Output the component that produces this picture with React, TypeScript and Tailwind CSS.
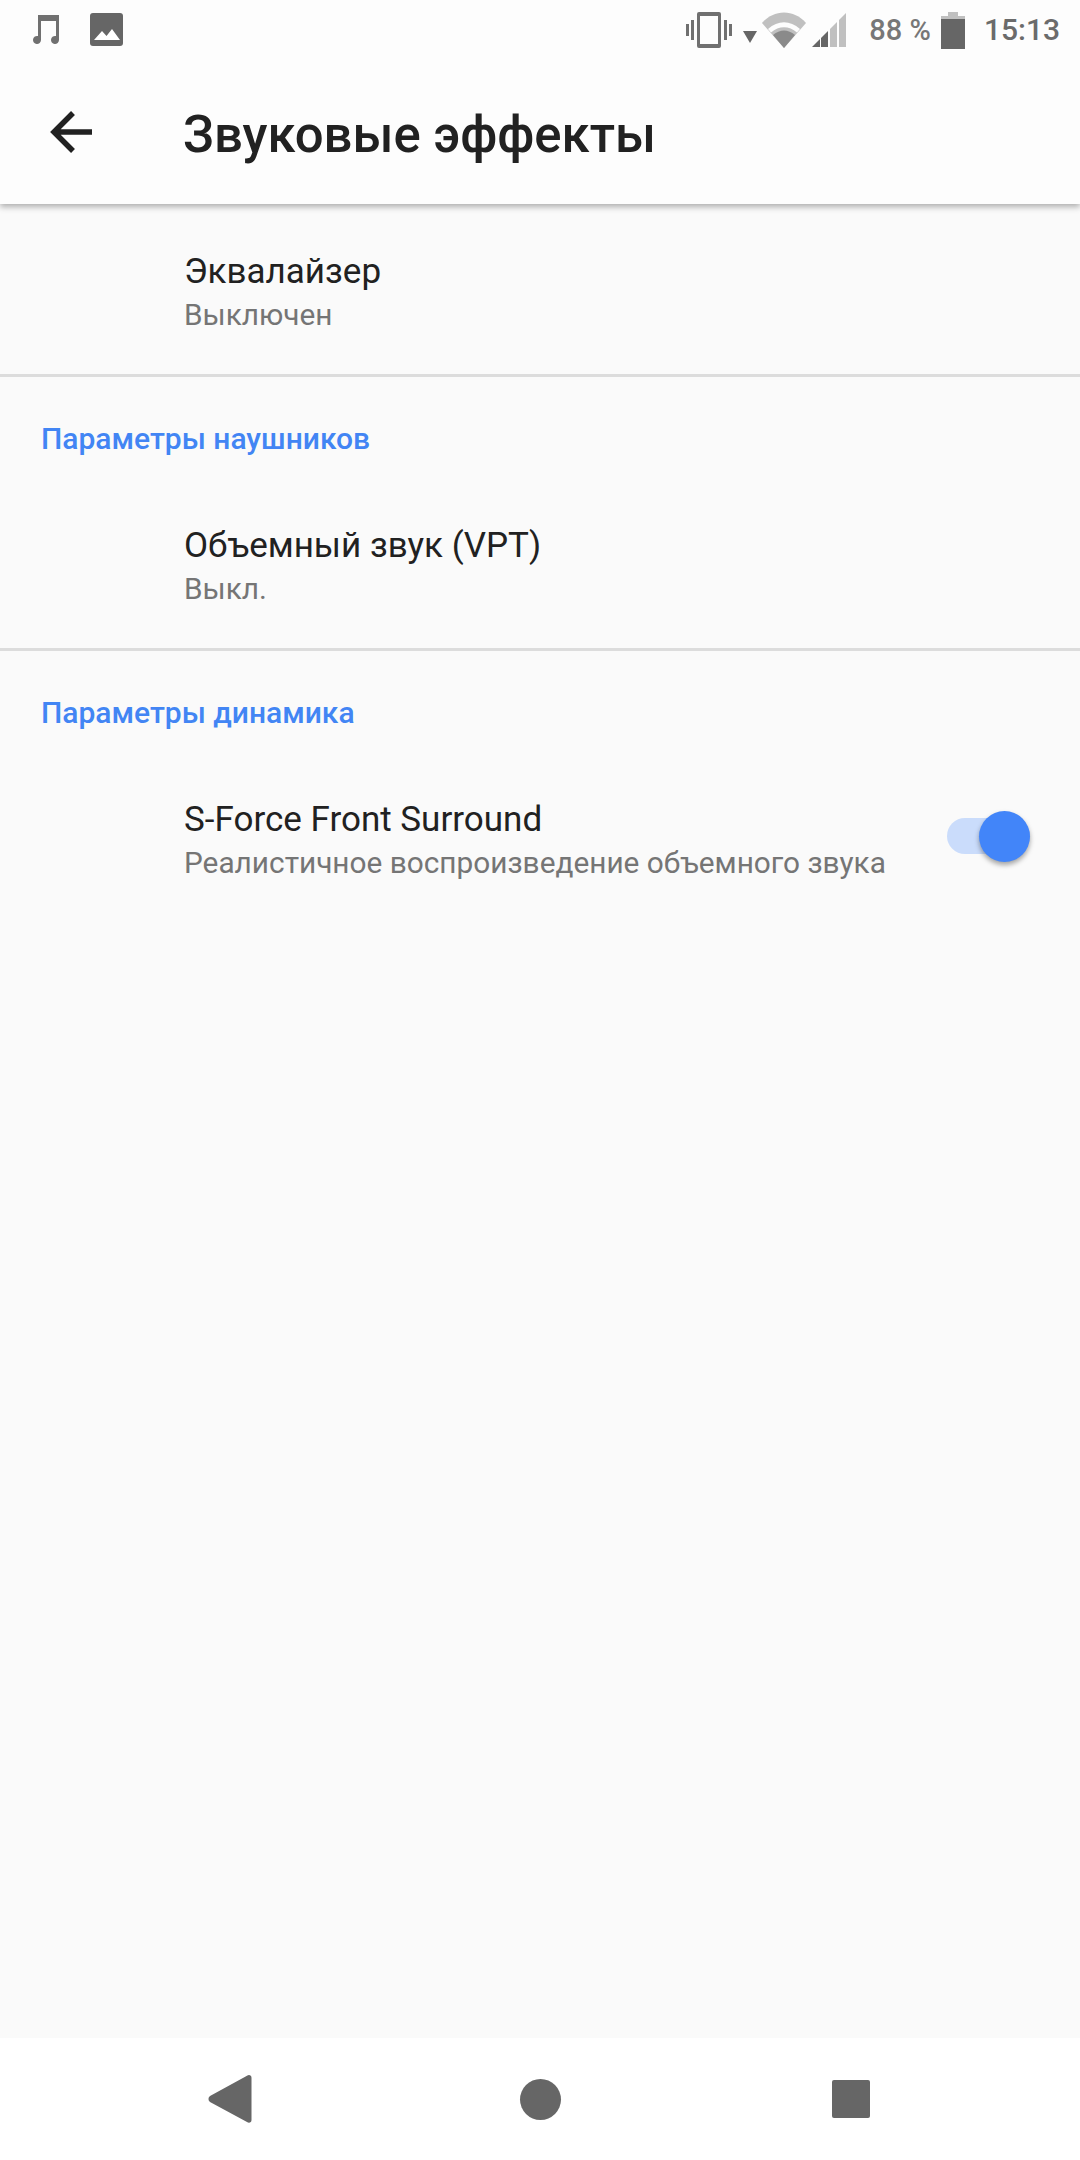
import React from "react";

const Row = ({ title, sub, right, h, pt }: { title: string; sub: string; right?: React.ReactNode; h: string; pt: string }) => (
  <div className={`flex items-start pl-[184px] pr-[50px] ${h} ${pt}`}>
    <div className="flex-1 min-w-0">
      <div className="text-[35px] leading-[44px] text-[#212121]">{title}</div>
      <div className="text-[29.8px] leading-[42px] text-[#757575]">{sub}</div>
    </div>
    {right}
  </div>
);

const Section = ({ children }: { children: string }) => (
  <div className="pl-[41px] pt-[46px] text-[30px] leading-[32px] font-medium text-[#4285f4]">{children}</div>
);

export default function App() {
  return (
    <div className="w-[1080px] h-[2160px] flex flex-col bg-[#fafafa] overflow-hidden font-['Roboto',sans-serif]">
      <header className="h-[204px] shrink-0 bg-[#fdfdfd] shadow-[0_3px_6px_rgba(0,0,0,0.3)] relative z-10">
        <div className="h-[60px] flex items-center justify-between pl-[30px] pr-[20px] text-[#666666]">
          <div className="flex items-center gap-[27px]">
            <svg width="32" height="32" viewBox="0 0 32 32" className="fill-[#707070]">
              <path d="M8 1h21v25a4 4 0 1 1-3-3.900V7H11v19a4 4 0 1 1-3-3.900z" />
            </svg>
            <svg width="34" height="34" viewBox="0 0 34 34" className="ml-[1px]">
              <rect width="33" height="33" rx="3" fill="#666" />
              <path d="M4 27l8-9 4.500 5 5.500-7 8 11z" fill="#fff" />
            </svg>
          </div>
          <div className="flex items-center">
            <svg width="46" height="36" viewBox="0 0 46 36" fill="#707070">
              <path fillRule="evenodd" d="M11 2a2 2 0 0 1 2-2h20a2 2 0 0 1 2 2v32a2 2 0 0 1-2 2H13a2 2 0 0 1-2-2zm3 2v28h18V4z" />
              <rect x="0" y="12" width="3" height="12" />
              <rect x="5" y="8" width="3" height="20" />
              <rect x="38" y="8" width="3" height="20" />
              <rect x="43" y="12" width="3" height="12" />
            </svg>
            <svg width="14" height="14" viewBox="0 0 14 14" className="ml-[11px] mt-[14px]" fill="#666">
              <path d="M0 1h14L7 13z" />
            </svg>
            <svg width="44" height="36" viewBox="0 0 44 36" className="ml-[5px]">
              <path d="M0 11C12-3 32-3 44 11L22 36z" fill="#c0c0c0" />
              <path d="M6 17c10-9 22-9 32 0l-3 3.500c-8-7-18-7-26 0z" fill="#fdfdfd" />
              <path d="M11 23c7-6 15-6 22 0L22 36z" fill="#8a8a8a" />
            </svg>
            <svg width="34" height="34" viewBox="0 0 34 34" className="ml-[6px]">
              <path d="M0 34L8 26V34z" fill="#666" />
              <path d="M9 25l7-7v16H9z" fill="#666" />
              <path d="M18 16l7-7v25h-7z" fill="#c0c0c0" />
              <path d="M27 7l7-7v34h-7z" fill="#c0c0c0" />
            </svg>
            <span className="ml-[23px] text-[29px] leading-[36px] font-medium text-[#777777]">88 %</span>
            <svg width="24" height="37" viewBox="0 0 24 37" className="ml-[10px]">
              <path d="M7 0h10v4H7zM0 4h24v3H0z" fill="#c0c0c0" />
              <rect y="7" width="24" height="30" fill="#666" />
            </svg>
            <span className="ml-[19px] text-[30px] leading-[36px] font-medium text-[#6b6b6b]">15:13</span>
          </div>
        </div>
        <div className="h-[144px] flex items-center">
          <svg width="42" height="42" viewBox="0 0 42 42" className="ml-[50px]" fill="none" stroke="#212121" strokeWidth="5.500">
            <path d="M42 21H4M23 2L4 21l19 19" />
          </svg>
          <h1 className="ml-[91px] mt-[5px] text-[50.9px] leading-[56px] font-medium text-[#212121]">Звуковые эффекты</h1>
        </div>
      </header>
      <main className="flex-1">
        <div className="border-b-[3px] border-[#dcdcdc]">
          <Row h="h-[170px]" pt="pt-[46px]" title="Эквалайзер" sub="Выключен" />
        </div>
        <Section>Параметры наушников</Section>
        <div className="border-b-[3px] border-[#dcdcdc]">
          <Row h="h-[193px]" pt="pt-[69px]" title="Объемный звук (VPT)" sub="Выкл." />
        </div>
        <Section>Параметры динамика</Section>
        <Row
          h="h-[194px]"
          pt="pt-[69px]"
          title="S-Force Front Surround"
          sub="Реалистичное воспроизведение объемного звука"
          right={
            <div className="relative mt-[20px] w-[83px] h-[36px] rounded-full bg-[#cadcfb]">
              <div className="absolute right-0 -top-[7px] w-[51px] h-[51px] rounded-full bg-[#4285f9] shadow-[0_3px_5px_rgba(0,0,0,0.35)]" />
            </div>
          }
        />
      </main>
      <nav className="h-[122px] shrink-0 bg-white flex items-center">
        <svg width="44" height="48" viewBox="0 0 44 48" className="ml-[208px]" fill="#666">
          <path d="M39 .8c2-1.500 4.500-.5 4.500 2V45c0 2.500-2.500 3.500-4.500 2L2 27c-2-1.500-2-4.500 0-6z" />
        </svg>
        <div className="ml-[268px] w-[41px] h-[41px] rounded-full bg-[#666]" />
        <div className="ml-[271px] w-[38px] h-[38px] rounded-[2px] bg-[#666]" />
      </nav>
    </div>
  );
}
